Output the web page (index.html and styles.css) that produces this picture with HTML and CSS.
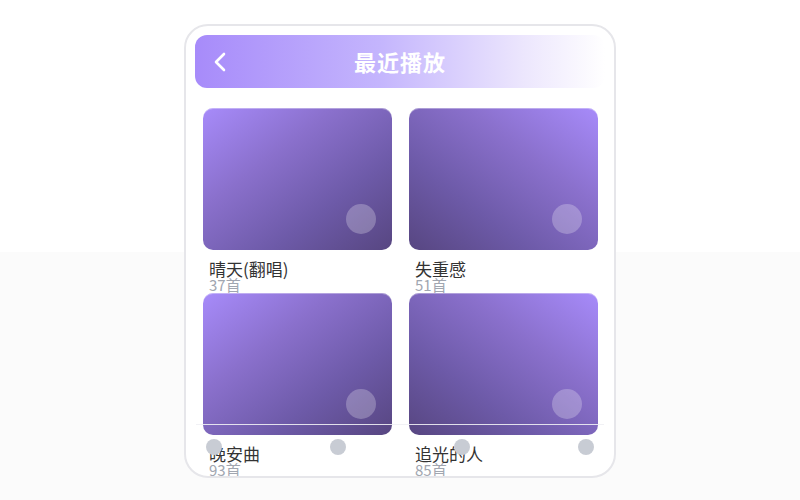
FILE: index.html
```html
<!DOCTYPE html>
<html lang="zh-CN">
<head>
  <meta charset="UTF-8">
  <meta name="viewport" content="width=device-width, initial-scale=1.0">
  <title>最近播放</title>
  <link rel="stylesheet" href="styles.css">
</head>
<body>
  <main class="frame">

    <div class="topbar">
      <svg class="back" width="14" height="22" viewBox="0 0 14 22">
        <path d="M11 3 L3 11 L11 19" fill="none" stroke="#fff" stroke-width="2.6" stroke-linecap="round" stroke-linejoin="round"/>
      </svg>
      <h1>最近播放</h1>
    </div>

    <ul class="lista">
      <li class="item">
        <div class="capa capa-a"><span class="play"></span></div>
        <p class="nome">晴天(翻唱)</p>
        <p class="qtd">37首</p>
      </li>
      <li class="item">
        <div class="capa capa-b"><span class="play"></span></div>
        <p class="nome">失重感</p>
        <p class="qtd">51首</p>
      </li>
      <li class="item">
        <div class="capa capa-a"><span class="play"></span></div>
        <p class="nome">晚安曲</p>
        <p class="qtd">93首</p>
      </li>
      <li class="item">
        <div class="capa capa-b"><span class="play"></span></div>
        <p class="nome">追光的人</p>
        <p class="qtd">85首</p>
      </li>
    </ul>

    <nav class="tabbar">
      <span class="dot"></span>
      <span class="dot"></span>
      <span class="dot"></span>
      <span class="dot"></span>
    </nav>

  </main>
</body>
</html>
```

FILE: styles.css
```css
html{
  background: #fbfbfb;
}
body{
  margin: 0;
  padding: 24px 0 0;
  height: 476px;
  background: linear-gradient(#ffffff 0, #ffffff 252px, #fbfbfb 252px);
  font-family: "Noto Sans CJK SC", "Noto Sans", sans-serif;
}

.frame{
  position: relative;
  width: 408px;
  height: 431px;
  margin: 0 auto;
  padding: 9px 10px 10px;
  border: 2px solid #e6e6ea;
  border-radius: 24px;
  background: #fff;
  overflow: hidden;
}

.topbar{
  position: relative;
  height: 53px;
  margin: 0 -1px;
  border-radius: 12px;
  background: linear-gradient(90deg, #a78bfa 0%, #c4b5fd 45%, #ece6fd 80%, #ffffff 100%);
  display: flex;
  align-items: center;
  justify-content: center;
}
.back{
  position: absolute;
  left: 18px;
  top: 16px;
}
.topbar h1{
  margin: 0 0 1px;
  color: #fff;
  font-size: 22px;
  font-weight: 700;
  letter-spacing: 1px;
}

.lista{
  list-style: none;
  margin: 20px 6px 0 7px;
  padding: 0;
  display: grid;
  grid-template-columns: 1fr 1fr;
  grid-auto-rows: 169px;
  column-gap: 17px;
  row-gap: 16px;
}
.item{
  min-width: 0;
}

.capa{
  position: relative;
  height: 142px;
  border-radius: 10px;
  box-shadow: inset 0 1px 0 rgba(255, 255, 255, 0.35);
}
.capa-a{
  background: linear-gradient(to bottom right, #a78bfa 0%, #8a70cc 35%, #6d5aa8 68%, #574681 100%);
}
.capa-b{
  background: linear-gradient(to bottom left, #a78bfa 0%, #8a70cc 35%, #6d5aa8 68%, #574681 100%);
}
.play{
  position: absolute;
  right: 16px;
  bottom: 16px;
  width: 30px;
  height: 30px;
  border-radius: 50%;
  background: rgba(255, 255, 255, 0.25);
}

.nome{
  margin: 8px 0 0 6px;
  font-size: 17px;
  line-height: 22px;
  color: #333;
}
.qtd{
  margin: -3px 0 0 6px;
  font-size: 15px;
  line-height: 16px;
  color: #a1a6b0;
}

.tabbar{
  position: absolute;
  left: 10px;
  right: 10px;
  bottom: 8px;
  height: 43px;
  padding: 0 10px;
  border-top: 1px solid rgba(240, 240, 244, 0.9);
  display: flex;
  align-items: center;
  justify-content: space-between;
}
.dot{
  width: 16px;
  height: 16px;
  border-radius: 50%;
  background: #c8ccd4;
}
```
